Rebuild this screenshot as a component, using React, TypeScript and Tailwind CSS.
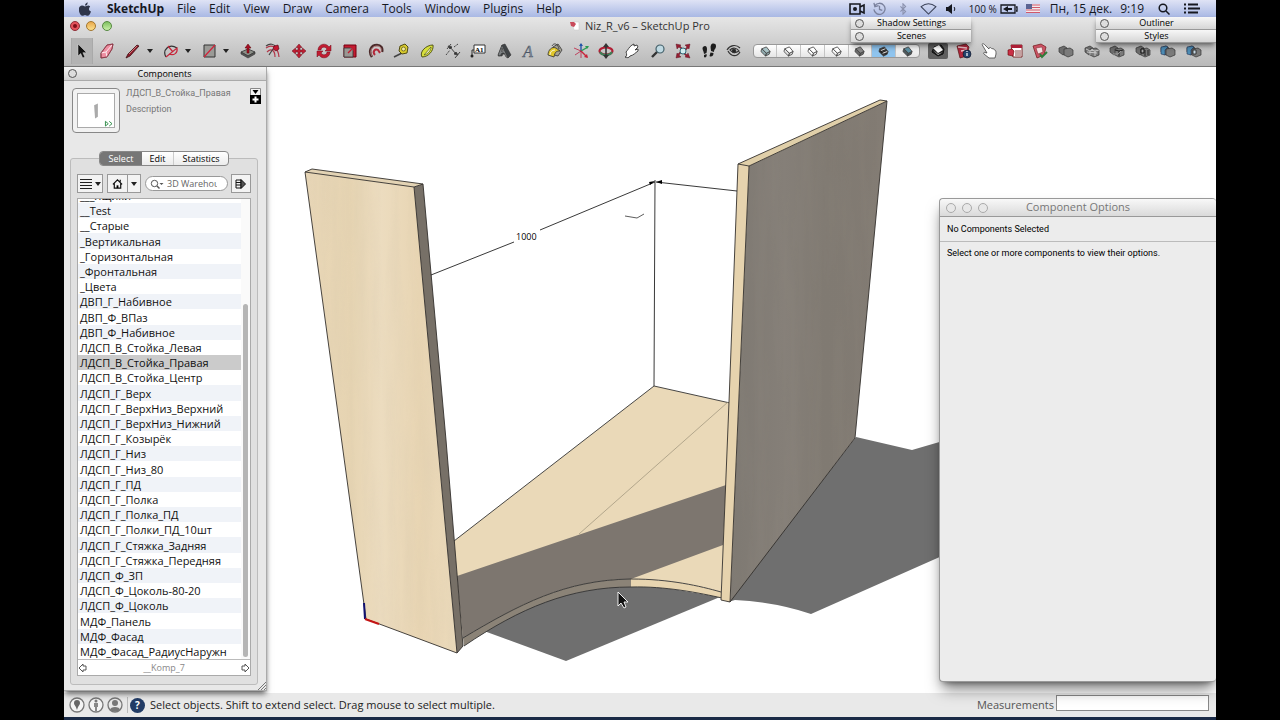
import React from 'react'

const menus = ['File', 'Edit', 'View', 'Draw', 'Camera', 'Tools', 'Window', 'Plugins', 'Help'];

const components = [
  '__Test',
  '__Старые',
  '_Вертикальная',
  '_Горизонтальная',
  '_Фронтальная',
  '_Цвета',
  'ДВП_Г_Набивное',
  'ДВП_Ф_ВПаз',
  'ДВП_Ф_Набивное',
  'ЛДСП_В_Стойка_Левая',
  'ЛДСП_В_Стойка_Правая',
  'ЛДСП_В_Стойка_Центр',
  'ЛДСП_Г_Верх',
  'ЛДСП_Г_ВерхНиз_Верхний',
  'ЛДСП_Г_ВерхНиз_Нижний',
  'ЛДСП_Г_Козырёк',
  'ЛДСП_Г_Низ',
  'ЛДСП_Г_Низ_80',
  'ЛДСП_Г_ПД',
  'ЛДСП_Г_Полка',
  'ЛДСП_Г_Полка_ПД',
  'ЛДСП_Г_Полки_ПД_10шт',
  'ЛДСП_Г_Стяжка_Задняя',
  'ЛДСП_Г_Стяжка_Передняя',
  'ЛДСП_Ф_ЗП',
  'ЛДСП_Ф_Цоколь-80-20',
  'ЛДСП_Ф_Цоколь',
  'МДФ_Панель',
  'МДФ_Фасад',
  'МДФ_Фасад_РадиусНаружн',
];

const solid = (
  <g stroke="#333" strokeWidth=".7" strokeLinejoin="round">
    <path d="m1 5 5-2 3 2v5l-4 2-4-3z" fill="#6d6d6d" />
    <path d="m6 6 6-1 3 2v5l-5 2-4-2z" fill="#7b7b7b" />
  </g>
);

// All toolbar drawings share a 16x16 box
const icons: Record<string, React.ReactNode> = {
  Select: <path d="M4 1v12l2.700-2.500 2 4.500 2.200-1-2-4.300h3.800z" fill="#111" stroke="#ddd" strokeWidth=".5" />,
  Eraser: (
    <g stroke="#8c3a48" strokeWidth=".8">
      <path d="M2 10 8 2l6-1-1 5-5 8-6 1z" fill="#ee8fa2" />
      <path d="m2 10 5-1 6-7M7 9l1 5" fill="none" stroke="#fff" />
      <path d="M2 10 8 2l6-1-1 5-5 8-6 1z" fill="none" />
    </g>
  ),
  Line: (
    <g>
      <path d="M1 15 3 11 12 2l2 1-9 10z" fill="#8d1c2b" stroke="#3d1015" strokeWidth=".8" />
      <path d="m4 11 8-8" stroke="#e08b8b" strokeWidth=".8" />
    </g>
  ),
  Arc: (
    <g fill="none">
      <path d="M3 14C-1 7 6 0 14 5" stroke="#333" strokeWidth="1.200" />
      <path d="m3 14 11-9c1 5-3 8-8 6M5 3l5 6" stroke="#c7253a" strokeWidth="1.200" />
    </g>
  ),
  Rectangle: (
    <g>
      <path d="M3 2h11v12H3z" fill="#9a9a96" stroke="#333" />
      <path d="M3 14 14 2" stroke="#d2213a" strokeWidth="1.200" />
    </g>
  ),
  'Push/Pull': (
    <g>
      <path d="m1 9 7-3 7 3-7 4z" fill="#8b8f88" stroke="#333" strokeWidth=".8" />
      <path d="M1 9v2l7 4 7-4V9l-7 4z" fill="#555" stroke="#333" strokeWidth=".6" />
      <path d="m8 1 3 4H9v5H7V5H5z" fill="#a80f26" stroke="#500" strokeWidth=".5" />
    </g>
  ),
  'Follow Me': (
    <g fill="none" strokeWidth="1.200">
      <path d="M1 5c5-4 12-2 13 9M2 9c4-4 8-2 8 5" stroke="#b3384a" />
      <path d="M1 3c4-3 8-2 10 1M4 12l4-6" stroke="#444" />
      <path d="m9 3 4-1 1 4-3 2-3-2z" fill="#c41730" stroke="#501" strokeWidth=".6" />
    </g>
  ),
  Move: (
    <path d="m8 1 3 3.500H9V7h2.500V5L15 8l-3.500 3V9H9v2.500h2L8 15l-3-3.500h2V9H4.500v2L1 8l3.500-3v2H7V4.500H5z" fill="#bf1f33" stroke="#6d0e1c" strokeWidth=".5" />
  ),
  Rotate: (
    <g fill="#c11c31" stroke="#700f1d" strokeWidth=".5">
      <path d="M2 7c0-6 8-8 11-3l2-2v6H9l2-2C9 3 5 4 5 7z" />
      <path d="M14 9c0 6-8 8-11 3l-2 2V8h6l-2 2c2 3 6 2 6-1z" />
    </g>
  ),
  Scale: (
    <g>
      <path d="M2 2h12v12H2z" fill="#c41b30" stroke="#701" />
      <path d="M2 5h9v9H2z" fill="#9b9793" stroke="#333" strokeWidth=".8" />
      <path d="m6 10 6-6M12 8V4H8" stroke="#c41b30" strokeWidth="1.400" fill="none" />
    </g>
  ),
  Offset: (
    <g fill="none">
      <path d="M4 14C0 8 3 2 9 2c4 0 6 3 5 7" stroke="#4b2a2a" strokeWidth="2.500" />
      <path d="M7 12C4 9 7 5 10 7l2 3" stroke="#b3283a" strokeWidth="2" />
      <path d="M4 13C1 8 4 3 9 3c3 0 5 2 4 6" stroke="#c98c8c" strokeWidth=".8" />
    </g>
  ),
  'Tape Measure': (
    <g>
      <path d="m1 14 8-4" stroke="#444" strokeWidth="1.600" />
      <path d="m7 3 5-2 3 3-1 6-5 1-3-3z" fill="#d8cb2e" stroke="#504b12" />
      <circle cx="10.500" cy="6" r="2" fill="#f2eca0" stroke="#504b12" strokeWidth=".7" />
    </g>
  ),
  Protractor: (
    <g stroke="#53561a">
      <path d="M3 14C0 9 7 2 14 2c1 6-5 12-11 12z" fill="#d7df3c" />
      <path d="m5 12 7-8c0 4-3 7-7 8z" fill="#f0f3bc" strokeWidth=".7" />
    </g>
  ),
  Dimension: (
    <g stroke="#444" fill="none" strokeWidth="1">
      <path d="m5 4 6 7M2 6l4-5M10 15l5-6" />
      <path d="m1 12 4-5m4-3 4-3" strokeDasharray="2 1" />
      <path d="m3 3 4 1-2 2zM13 12l-4-1 2-2z" fill="#333" />
    </g>
  ),
  Text: (
    <g>
      <path d="M4 2h11v8H4z" fill="#fff" stroke="#333" />
      <path d="M4 7H2v5" fill="none" stroke="#333" />
      <circle cx="2" cy="13" r="1.500" fill="#222" />
      <text x="5" y="9" fontSize="7" fontFamily="Liberation Serif, serif" fontWeight="bold">A1</text>
    </g>
  ),
  '3D Text': (
    <g stroke="#333" strokeWidth=".6" strokeLinejoin="round">
      <path d="m6 2 3-1 6 11-3 3-2-4-3 0-1 2-4 0z" fill="#3f4346" />
      <path d="m6 2-4 10 2 1 2-3 2 0 2 4 2 1z" fill="#7d8183" />
      <path d="m6 5 1 3-1.500.5z" fill="#ccc" />
    </g>
  ),
  'Section Text': (
    <text x="2" y="14" fontSize="16" fontStyle="italic" fontFamily="Liberation Serif, serif" fill="#8a93a3" stroke="#4b5563" strokeWidth=".5">A</text>
  ),
  'Paint Bucket': (
    <g stroke="#333" strokeWidth=".8">
      <path d="m6 4 5-3 4 6-4 6-4-1z" fill="#a5a295" />
      <path d="M1 12c0-5 4-9 8-7l4 3c-4 0-5 1-6 6z" fill="#e0c62a" />
      <path d="M3 12c0-3 2-5 5-5" fill="none" stroke="#fff" />
      <path d="M5 3c2-4 6-2 7 3" fill="none" />
    </g>
  ),
  Axes: (
    <g strokeWidth="1.400">
      <path d="M8 9V1" stroke="#2455a8" />
      <path d="m8 8 7-4" stroke="#2c9c53" />
      <path d="m8 8 6 6" stroke="#c8253a" />
      <path d="M8 8 1 5M8 8l-6 4m6-4v7" stroke="#b24" strokeWidth=".8" />
      <path d="m6 3 2-3 2 3z" fill="#2455a8" />
      <path d="m12 3 4 0-2 3z" fill="#2c9c53" />
      <path d="m11 14 4 1-1-4z" fill="#c8253a" />
    </g>
  ),
  Orbit: (
    <g fill="none">
      <ellipse cx="8" cy="8" rx="6.500" ry="3.500" stroke="#b11e35" strokeWidth="2.200" />
      <path d="M2 9c2 4 10 4 12 0" stroke="#3c8058" strokeWidth="2" />
      <path d="M8 2v12" stroke="#333" strokeWidth="1.600" />
      <path d="m5 4 3-4 3 4zM5 12l3 4 3-4z" fill="#333" />
    </g>
  ),
  Pan: (
    <path d="M1 14c2 0 2-3 1-5 2-2 3-5 6-7l2-1v2l3-1 1 2-3 3 3-1v2c-3 2-4 4-8 5-1 2-3 2-5 1z" fill="#fff" stroke="#333" strokeWidth=".9" />
  ),
  Zoom: (
    <g>
      <path d="m2 14 6-6" stroke="#333" strokeWidth="2.400" />
      <circle cx="10" cy="6" r="4" fill="#bfd9e2" stroke="#44606a" strokeWidth="1.200" />
    </g>
  ),
  'Zoom Extents': (
    <g>
      <path d="m1 1 5 1-1 1 2 2-1 1-2-2-2 2zM15 1l-1 5-1-1-2 2-1-1 2-2-2-2zM1 15l1-5 1 1 2-2 1 1-2 2 2 2zM15 15l-5-1 1-1-2-2 1-1 2 2 1-2z" fill="#951d31" stroke="#512" strokeWidth=".4" />
      <circle cx="8" cy="8" r="3" fill="#d3edf0" stroke="#336b78" />
    </g>
  ),
  Walk: (
    <g fill="#1d1d1d">
      <path d="M2 4c2-2 4-1 4 2 0 2-.5 3-.5 4L3 11C3 8 .5 6 2 4zM3 12l2.500-1c1 3-1.500 4-2.500 3z" />
      <path d="M10 2c1-2 5-2 5 1 0 3-2 3-2 6L10 8c0-2-1-4 0-6zM9.500 9.500l3 .5c0 4-3 4-4 3z" />
    </g>
  ),
  'Look Around': (
    <g fill="none" stroke="#333" strokeWidth="1.200">
      <path d="M1 7c3-5 9-6 13-2M2 8c3 6 9 6 12 1M4 7c3-3 7-2 9 1-3 2-6 3-9-1z" />
      <circle cx="8" cy="8" r="1.700" fill="#222" />
    </g>
  ),
  Warehouse: (
    <g strokeLinejoin="round">
      <path d="m2 9 2-5 7-2 3 4-1 5-5 2z" fill="#222" stroke="#111" />
      <path d="m3 5 6-3 4 5-5 3z" fill="#fff" />
      <path d="m3 7 5 5 5-3-5 2z" fill="#bbb" />
    </g>
  ),
  'Model Info': (
    <g>
      <path d="m1 3 9-2 3 3-2 9-7 2z" fill="#b3283e" stroke="#511" strokeWidth=".7" />
      <path d="m2 4 9 1M5 8l6-1" stroke="#eec5cc" strokeWidth="1.500" />
      <circle cx="11" cy="11" r="4" fill="#23436c" stroke="#112" strokeWidth=".6" />
      <path d="M11 10v3m0-5v1" stroke="#fff" strokeWidth="1.200" />
    </g>
  ),
  Interact: (
    <path d="M1 1.500C2 0 3 1 4 2l4 4c0-2 2-2 3 0 1-1 2 0 2.500 1 1.500 0 1.500 2 1.500 4l-1 4H8L3 11c-1-1 0-2 1-1.500L6 10z" fill="#fff" stroke="#444" strokeWidth=".8" />
  ),
  'Component Options': (
    <g>
      <path d="M4 2h11v12H6z" fill="#fff" stroke="#600" strokeWidth=".8" />
      <path d="M4 2h11v3H4z" fill="#ad1f37" />
      <path d="M8 8h6M8 10h6M8 12h6" stroke="#844" />
      <path d="m1 7 4-1 2 2-1 5-5-1z" fill="#c93047" stroke="#600" strokeWidth=".6" />
    </g>
  ),
  'Component Attributes': (
    <g>
      <path d="m1 3 8-2 5 3-2 8-7 3z" fill="#cc5265" stroke="#722" strokeWidth=".8" />
      <path d="m4 5 6-1 1 5-5 2z" fill="#f4dfe1" stroke="#722" strokeWidth=".5" />
      <path d="m8 11 2 3 5-5" fill="none" stroke="#2f7d3a" strokeWidth="2" />
    </g>
  ),
  'Outer Shell': solid,
  Intersect: (
    <g>
      {solid}
      <path d="m2 6 4 2v4M6 8l3-2M7 7l4 1v5M11 8l4-1M3 9l10 1" fill="none" stroke="#ddd" strokeWidth=".8" />
    </g>
  ),
  Union: (
    <g>
      {solid}
      <path d="m6 7 4 1v5m0-5 4-1" fill="none" stroke="#222" />
      <path d="M4 11h5l3-3" fill="none" stroke="#aaa" strokeWidth=".8" />
    </g>
  ),
  Subtract: (
    <g>
      {solid}
      <path d="m6 6 3 0v4l-3 0z" fill="#aaa" stroke="#111" />
      <path d="M10 7v6m3-6v5" stroke="#222" />
    </g>
  ),
  Trim: (
    <g>
      {solid}
      <path d="m1 4 5-1 2 1-3 3v5l-4-1z" fill="#4e8db5" stroke="#235" strokeWidth=".6" />
    </g>
  ),
  Split: (
    <g>
      {solid}
      <path d="m1 4 5-1 2 1-3 3v5l-4-1z" fill="#4e8db5" stroke="#235" strokeWidth=".6" />
      <path d="m7 7 3 0v4l-3 0z" fill="#c9dbe6" stroke="#222" strokeWidth=".8" />
    </g>
  ),
};

const mainTools = [
  'Push/Pull', 'Follow Me', 'Move', 'Rotate', 'Scale', 'Offset', 'Tape Measure', 'Protractor', 'Dimension', 'Text',
  '3D Text', 'Section Text', 'Paint Bucket', 'Axes', 'Orbit', 'Pan', 'Zoom', 'Zoom Extents', 'Walk', 'Look Around',
];

const extraTools = [
  'Warehouse', 'Model Info', 'Interact', 'Component Options', 'Component Attributes',
  'Outer Shell', 'Intersect', 'Union', 'Subtract', 'Trim', 'Split',
];

const faceStyles = [
  { label: 'X-Ray', top: '#a9c3c6', side: '#8fa9ad' },
  { label: 'Back Edges', top: '#ffffff', side: '#dddddd' },
  { label: 'Wireframe', top: '#ffffff', side: '#ffffff' },
  { label: 'Hidden Line', top: '#ffffff', side: '#f6f6f6' },
  { label: 'Shaded', top: '#8b8b8b', side: '#6b6b6b' },
  { label: 'Shaded With Textures', top: '#333333', side: '#222222' },
  { label: 'Monochrome', top: '#5f93a6', side: '#4d5a5e' },
];

const Icon = ({ name }: { name: string }) => (
  <svg viewBox="0 0 16 16" className="size-4 shrink-0">{icons[name]}</svg>
);

const Caret = () => (
  <svg viewBox="0 0 6 4" className="h-1 w-[6px] shrink-0"><path d="M0 0h6L3 4z" fill="#222" /></svg>
);

const Tool = ({ name }: { name: string }) => (
  <button
    aria-label={name}
    className={`flex w-5 items-center justify-center ${name === 'Warehouse' ? 'h-4 rounded-[2px] bg-[#606060]' : 'h-5'}`}
  >
    <Icon name={name} />
  </button>
);

const DropTool = ({ name }: { name: string }) => (
  <button aria-label={name} className="flex h-5 w-7 items-center justify-between">
    <Icon name={name} />
    <Caret />
  </button>
);

const MenuBar = () => (
  <header className="flex h-[17px] shrink-0 items-center justify-between bg-linear-to-b from-[#dfe3f5] to-[#a9b8e4] pr-4 pl-[15px] text-[12px] leading-4 text-[#16181f]">
    <nav className="flex items-center gap-[13px]">
      <a href="#" aria-label="Apple" className="pr-[3px]">
        <svg viewBox="0 0 14 16" className="h-[14px] w-3">
          <path d="M10 1c0 2-1 3-3 3 0-2 1-3 3-4zM7 5c1 0 2-1 4-1 1 0 2 1 2 1-2 2-2 5 1 6-1 3-2 5-4 5-1 0-2-1-3-1s-2 1-3 1c-3 0-6-8-3-11 2-2 4-1 6 0z" fill="#30364a" />
        </svg>
      </a>
      <a href="#" className="font-bold">SketchUp</a>
      {menus.map((item) => (
        <a key={item} href="#">{item}</a>
      ))}
    </nav>
    <div className="flex items-center">
      <svg viewBox="0 0 16 12" className="mr-2 h-3 w-4">
        <path d="M1 1h10v10H1zM11 4l4-2v8l-4-2" fill="none" stroke="#16181f" strokeWidth="1.600" />
        <circle cx="6" cy="6" r="2" fill="#16181f" />
      </svg>
      <svg viewBox="0 0 14 14" className="mr-3 size-[13px]" fill="none" stroke="#7a819d" strokeWidth="1.400">
        <path d="M2 4a6 6 0 1 1-1 4M1 1l1 4 4-1M7 4v4l3 1" />
      </svg>
      <svg viewBox="0 0 10 14" className="mr-3 h-3 w-[10px]" fill="none" stroke="#8a91ad" strokeWidth="1.300">
        <path d="m2 4 6 6-3 3V1l3 3-6 6" />
      </svg>
      <svg viewBox="0 0 18 13" className="mr-2 h-3 w-[17px]" fill="none" stroke="#3c4359" strokeWidth="1.100">
        <path d="M1 4c5-4 11-4 16 0l-8 8z" />
      </svg>
      <svg viewBox="0 0 12 10" className="mr-3 h-[10px] w-3">
        <path d="M1 3h2l4-3v10L3 7H1z" fill="#16181f" />
        <path d="M9 3c1 1 1 3 0 4" fill="none" stroke="#16181f" />
      </svg>
      <span className="mr-[3px] text-[10px]">100 %</span>
      <svg viewBox="0 0 18 10" className="mr-2 h-[10px] w-[18px]">
        <path d="M1 1h14v8H1zM16 3h1v4h-1" fill="none" stroke="#16181f" strokeWidth="1.300" />
        <path d="m3 5 5-3v2h4v2H8v2z" fill="#16181f" />
      </svg>
      <svg viewBox="0 0 14 9" className="mr-[10px] h-[9px] w-[14px]">
        <path d="M0 0h14v9H0z" fill="#f3e9ec" />
        <path d="M0 1h14M0 3.500h14M0 6h14M0 8.500h14" stroke="#d0596b" />
        <path d="M0 0h6v5H0z" fill="#5b6493" />
      </svg>
      <time className="flex gap-2"><span>Пн, 15 дек.</span><span>9:19</span></time>
      <svg viewBox="0 0 12 12" className="mx-[14px] size-3" fill="none" stroke="#16181f" strokeWidth="1.500">
        <circle cx="5" cy="5" r="3.800" />
        <path d="m8 8 3.500 3.500" />
      </svg>
      <svg viewBox="0 0 16 11" className="h-[11px] w-4" stroke="#16181f" strokeWidth="2">
        <path d="M0 1.500h2M4 1.500h10M0 5.500h2M4 5.500h12M0 9.500h2M4 9.500h10" />
      </svg>
    </div>
  </header>
);

const Toolbar = () => (
  <div className="flex h-8 items-center justify-between pr-3 pl-[7px]">
    <div className="flex items-center gap-1">
      <button aria-label="Select" className="flex h-[26px] w-[22px] items-center justify-center border-x border-[#a9a9a9] bg-[#b3b3b3]">
        <Icon name="Select" />
      </button>
      <Tool name="Eraser" />
    </div>
    <div className="flex w-[104px] justify-between">
      <DropTool name="Line" />
      <DropTool name="Arc" />
      <DropTool name="Rectangle" />
    </div>
    <div className="flex w-[507px] justify-between">
      {mainTools.map((name) => <Tool key={name} name={name} />)}
    </div>
    <div className="flex h-[14px] w-[167px] divide-x divide-[#c4c4c4] overflow-hidden rounded-[4px] border border-[#999] bg-linear-to-b from-white to-[#e6e6e6]">
      {faceStyles.map((face, i) => (
        <button
          key={face.label}
          aria-label={face.label}
          className={`flex flex-1 items-center justify-center ${i === 5 ? 'bg-[#8fc4ee]' : ''}`}
        >
          <svg viewBox="0 0 12 12" className="size-[11px]" stroke="#444" strokeWidth=".9" strokeLinejoin="round">
            <path d="m2 3 5-2 4 5-4 2z" fill={face.top} />
            <path d="M2 3 1 6l5 5 1-3zM7 8l-1 3 4-2 1-3z" fill={face.side} />
            {i === 5 && <path d="m3 5 5-2M5 8l5-2" stroke="#fff" />}
          </svg>
        </button>
      ))}
    </div>
    <div className="flex w-[276px] items-center justify-between">
      {extraTools.map((name) => <Tool key={name} name={name} />)}
    </div>
  </div>
);

const TitleBar = () => (
  <div className="flex h-[18px] items-center px-[6px] text-[11px] text-[#333]">
    <div className="flex flex-1 gap-[6px]">
      <button aria-label="Close" className="flex size-[10px] items-center justify-center rounded-full border border-[#8d3038] bg-[#e4525c]">
        <span className="size-1 rounded-full bg-[#7d0f18]" />
      </button>
      <button aria-label="Minimize" className="size-[10px] rounded-full border border-[#a3762c] bg-linear-to-b from-[#e9a94a] to-[#fbe08c]" />
      <button aria-label="Zoom window" className="size-[10px] rounded-full border border-[#55893f] bg-linear-to-b from-[#7fc05f] to-[#cbf0a8]" />
    </div>
    <h1 className="flex items-center gap-[5px]">
      <svg viewBox="0 0 10 10" className="size-[10px]">
        <path d="M2 1h7v8H4z" fill="#fff" stroke="#ccc" strokeWidth=".6" />
        <path d="m0 1 4 0 2 2-2 3-3-1z" fill="#c94b5b" />
      </svg>
      Niz_R_v6 – SketchUp Pro
    </h1>
    <div className="flex-1" />
  </div>
);

const Palettes = ({ titles, className }: { titles: string[]; className: string }) => (
  <div className={`absolute top-0 z-10 w-[120px] shadow-md shadow-black/40 ${className}`}>
    {titles.map((title) => (
      <div key={title} className="flex h-[13px] items-center border-b border-[#999] bg-linear-to-b from-[#f7f7f7] to-[#d6d6d6] pl-1 text-[9px] leading-3 text-black">
        <button aria-label={`Close ${title}`} className="size-[9px] rounded-full border border-[#555] bg-[#ddd]" />
        <h2 className="flex-1 pr-3 text-center">{title}</h2>
      </div>
    ))}
  </div>
);

const ComponentsPanel = () => (
  <aside className="relative z-10 flex w-[203px] shrink-0 flex-col border-r border-b border-[#aaa] bg-[#e8e8e8] shadow-md shadow-black/50">
    <div className="flex h-[14px] items-center border-b border-[#aaa] bg-linear-to-b from-[#f4f4f4] to-[#d0d0d0] pl-1">
      <button aria-label="Close Components" className="size-[9px] rounded-full border border-[#555] bg-[#ddd]" />
      <h2 className="flex-1 pr-[14px] text-center text-[9px] leading-3">Components</h2>
    </div>

    <div className="flex pt-[7px] pr-[5px] pl-2 font-['Roboto','Open_Sans',sans-serif] text-[9px] text-[#777]">
      <div className="h-[45px] w-[48px] rounded-[4px] border border-[#888] bg-[#f2f2f2] p-1">
        <svg viewBox="0 0 38 35" className="h-full w-full border border-[#aaa] bg-white">
          <path d="m17 12 4-2v14l-3 2z" fill="#aaa" />
          <path d="M29 29v5l3-2.500zM33 29l3 2.500-3 2.500" fill="none" stroke="#2c8a45" />
        </svg>
      </div>
      <div className="flex-1 pl-[6px] leading-4">
        <p className="-mt-[3px]">ЛДСП_В_Стойка_Правая</p>
        <p>Description</p>
      </div>
      <button aria-label="Secondary pane" className="h-4 w-[11px]">
        <svg viewBox="0 0 11 16" className="h-4 w-[11px]">
          <path d="M.5.5h10v7H.5z" fill="#f4f4f4" stroke="#888" />
          <path d="M2.500 2h6l-3 4z" />
          <path d="M0 7h11v9H0z" />
          <path d="M5.500 8.500v6m-3-3h6" stroke="#fff" strokeWidth="2" />
        </svg>
      </button>
    </div>

    <div className="mt-[25px] mr-2 mb-[5px] ml-[6px] flex flex-1 flex-col rounded-[3px] border border-[#bcbcbc] bg-[#e0e0e0] px-[6px] pb-2">
      <div role="tablist" className="-mt-2 flex h-[15px] w-[130px] self-center overflow-hidden rounded-[4px] border border-[#888] bg-linear-to-b from-white to-[#ececec] text-[9px] leading-3">
        <button role="tab" aria-selected="true" className="w-[42px] bg-[#767676] text-white">Select</button>
        <button role="tab" className="w-8 border-r border-[#ccc]">Edit</button>
        <button role="tab" className="flex-1">Statistics</button>
      </div>

      <div className="mt-2 mb-[5px] flex h-[19px] items-stretch">
        <button aria-label="View options" className="flex w-[26px] items-center justify-center gap-[3px] border border-[#999] bg-[#f3f3f3]">
          <svg viewBox="0 0 12 11" className="h-[11px] w-3"><path d="M0 1.500h12M0 4.500h12M0 7.500h12M0 10.500h12" stroke="#222" /></svg>
          <Caret />
        </button>
        <button aria-label="In Model" className="ml-1 flex w-[21px] items-center justify-center border border-[#999] bg-[#f3f3f3]">
          <svg viewBox="0 0 12 12" className="size-[11px]">
            <path d="M1 7l5-5 5 5M2.500 6v5h7V6M9 2v2" fill="none" stroke="#111" strokeWidth="1.300" />
            <path d="M5 8h2v3H5z" />
          </svg>
        </button>
        <button aria-label="Navigation" className="-ml-px flex w-[14px] items-center justify-center border border-[#999] bg-[#f3f3f3]">
          <Caret />
        </button>
        <label className="my-[2px] ml-1 flex flex-1 items-center overflow-hidden rounded-full border border-[#999] bg-white pr-[10px] pl-1">
          <svg viewBox="0 0 14 10" className="h-[10px] w-[14px] shrink-0" fill="none" stroke="#555">
            <circle cx="4.500" cy="4.500" r="3.200" />
            <path d="m7 7 2.500 2.500" strokeWidth="1.400" />
            <path d="M9.500 4h4l-2 2z" fill="#555" stroke="none" />
          </svg>
          <input aria-label="Search 3D Warehouse" defaultValue="3D Warehouse" className="ml-[3px] w-full min-w-0 bg-transparent text-[9px] leading-3 text-[#666] outline-none" />
        </label>
        <button aria-label="Details" className="ml-[3px] flex w-[20px] items-center justify-center border border-[#999] bg-[#f3f3f3]">
          <svg viewBox="0 0 12 12" className="size-3">
            <path d="M1 2h5v8H1zM1 4.500h5M1 7h5" fill="none" stroke="#111" />
            <path d="M6 1.500 10.500 6 6 10.500z" fill="#555" stroke="#111" />
          </svg>
        </button>
      </div>

      <div className="flex flex-1 flex-col border border-[#aaa] bg-white">
        <div className="flex flex-1">
          <ul className="flex flex-1 flex-col overflow-hidden text-[11px] whitespace-nowrap text-[#111]">
            <li className="flex h-1 shrink-0 items-end overflow-hidden pl-[2px] leading-[15px]">___Ящики</li>
            {components.map((name, i) => (
              <li
                key={name}
                className={`flex flex-1 items-center pl-[2px] leading-[15px] ${
                  i === 10 ? 'bg-[#cbcbcb]' : i % 2 === 0 ? 'bg-[#f0f3f8]' : ''
                }`}
              >
                {name}
              </li>
            ))}
          </ul>
          <div className="flex w-[9px] flex-col items-center bg-[#fafafa] pt-[105px] pb-[2px]">
            <div className="w-[5px] flex-1 rounded-full bg-[#b5b5b5]" />
          </div>
        </div>
        <div className="flex h-4 items-center justify-between border-t border-[#bbb] text-[9px] text-[#888]">
          <button aria-label="Back">
            <svg viewBox="0 0 10 10" className="size-[10px]"><path d="m1 5 4-4v2h3v4H5v2z" fill="#fff" stroke="#555" /></svg>
          </button>
          <span>__Komp_7</span>
          <button aria-label="Forward">
            <svg viewBox="0 0 10 10" className="size-[10px]"><path d="M9 5 5 1v2H2v4h3v2z" fill="#fff" stroke="#555" /></svg>
          </button>
        </div>
      </div>
    </div>
    <svg viewBox="0 0 8 8" className="absolute right-0 bottom-0 size-2"><path d="m0 8 8-8M3 8l5-5M6 8l2-2" stroke="#777" /></svg>
  </aside>
);

// Cabinet model: two uprights, the radius shelf between them and their shadows
const Model = () => (
  <svg viewBox="64 67 1152 626" className="absolute inset-0 h-full w-full" strokeLinejoin="round">
    <defs>
      <linearGradient id="wood" x1="0" x2="1" y1="0" y2="0">
        <stop offset="0" stopColor="#e9d7b7" />
        <stop offset=".3" stopColor="#e6d4b2" />
        <stop offset=".5" stopColor="#ecdcbf" />
        <stop offset=".75" stopColor="#e8d5b3" />
        <stop offset="1" stopColor="#ebdabb" />
      </linearGradient>
      <linearGradient id="shade" x1="0" x2="1" y1="0" y2="0">
        <stop offset="0" stopColor="#7e7972" />
        <stop offset=".35" stopColor="#857f78" />
        <stop offset=".6" stopColor="#807a72" />
        <stop offset="1" stopColor="#827b73" />
      </linearGradient>
      <filter id="grain" x="0" y="0" width="1" height="1">
        <feTurbulence type="fractalNoise" baseFrequency=".09 .008" numOctaves="3" seed="4" />
        <feColorMatrix values="0 0 0 0 .45  0 0 0 0 .4  0 0 0 0 .32  .5 0 0 0 -.16" />
        <feComposite in2="SourceGraphic" operator="in" />
      </filter>
    </defs>

    <path d="M856 437 912 450 960 436V548L811 614Q775 602 735 600L728 602Z" fill="#6f6f6f" />
    <path d="M484 631 566 661 720 597 630 582 540 600Z" fill="#6f6f6f" />

    {/* shelf */}
    <path d="M454 541 654 386 730 403 721 592C700 586 670 579 630 579C565 580 520 604 463 638Z" fill="#ead9b8" />
    <path d="M457 576 726 485 723 545 631 579C565 580 520 604 463 638Z" fill="#7d766f" />
    <path d="M463 638C520 604 565 580 631 579V587C570 587 520 608 464 646Z" fill="#8b8377" />
    <path d="M631 579C670 579 700 586 721 592L722 598C700 593 665 586 631 587Z" fill="#e8d5b0" />
    <path d="M454 541 654 386 730 403M463 638C520 604 565 580 631 579C670 579 700 586 721 592M464 646C520 608 570 587 631 587C665 586 700 593 722 598" fill="none" stroke="#333" strokeWidth=".9" />
    <path d="M728 402 579 534" stroke="#9b9079" strokeWidth=".7" />

    {/* left upright */}
    <path d="M305 172 414 187 457 653 366 619Z" fill="url(#wood)" />
    <path d="M305 172 414 187 457 653 366 619Z" filter="url(#grain)" opacity=".3" />
    <path d="M414 187 423 184 446 440 463 646 457 653Z" fill="#777067" />
    <path d="M305 172 312 169 423 184 414 187Z" fill="#e3d3b4" />
    <path d="M305 172 312 169 423 184 414 187ZM414 187 457 653M423 184 446 440 463 646 457 653 366 619 305 172" fill="none" stroke="#33302c" strokeWidth=".9" />

    {/* right upright */}
    <path d="M749 166 887 101 855 438 730 602Z" fill="url(#shade)" />
    <path d="M749 166 887 101 855 438 730 602Z" filter="url(#grain)" opacity=".25" />
    <path d="M738 164 749 166 730 602 721 600 729 402Z" fill="#e6d3ae" />
    <path d="M738 164 880 100 887 101 749 166Z" fill="#e0cfa9" />
    <path d="M738 164 880 100 887 101 749 166ZM749 166 730 602M738 164 729 402 721 600 730 602 855 438 887 101" fill="none" stroke="#33302c" strokeWidth=".9" />

    {/* dimensions */}
    <path d="M431 275 514 242M540 230 655 182M655 180 654 386M656 182 737 191" fill="none" stroke="#222" strokeWidth=".9" />
    <path d="M625 216 637 218 644 214" fill="none" stroke="#333" strokeWidth=".8" />
    <path d="m655 181-6 1 1 3zM656 182l6-2v4z" />
    <text x="516" y="240" fontSize="9" fill="#000">1000</text>
    <path d="M364 603 365 619" stroke="#101070" strokeWidth="2" />
    <path d="M365 619 379 624" stroke="#c41414" strokeWidth="2" />

    <path d="M618 592v14l3-3 3 5 2-1-2-5h4z" fill="#111" stroke="#fff" strokeWidth=".9" />
  </svg>
);

const ComponentOptions = () => (
  <section className="absolute top-[131px] right-0 bottom-[11px] w-[277px] rounded-[4px] border border-r-0 border-[#999] bg-[#ececec] font-['Roboto','Open_Sans',sans-serif] text-[9px] shadow-lg shadow-black/50">
    <div className="flex h-[18px] items-center rounded-t-[4px] border-b border-[#999] bg-linear-to-b from-[#f8f8f8] to-[#dadada] px-[6px]">
      <div className="flex flex-1 gap-[6px]">
        <button aria-label="Close options" className="size-[10px] rounded-full border border-[#aaa] bg-[#e8e8e8]" />
        <button aria-label="Minimize options" className="size-[10px] rounded-full border border-[#aaa] bg-[#e8e8e8]" />
        <button aria-label="Zoom options" className="size-[10px] rounded-full border border-[#aaa] bg-[#e8e8e8]" />
      </div>
      <h2 className="font-['Open_Sans','Noto_Sans',sans-serif] text-[11px] text-[#777]">Component Options</h2>
      <div className="flex-1" />
    </div>
    <p className="border-b border-[#bbb] px-[7px] py-[5px] leading-[14px]">No Components Selected</p>
    <p className="px-[7px] py-[3px] leading-4">Select one or more components to view their options.</p>
  </section>
);

const StatusBar = () => (
  <footer className="flex h-6 shrink-0 items-center bg-[#e9e9e9] px-[5px] text-[11px] text-[#222]">
    <div className="flex items-center gap-[3px] border-r border-[#bbb] pr-1">
      <button aria-label="Geo-location">
        <svg viewBox="0 0 16 16" className="size-4">
          <circle cx="8" cy="8" r="7" fill="#f4f4f4" stroke="#777" strokeWidth="1.300" />
          <path d="M8 13C7 9 5 8 5 6a3 3 0 0 1 6 0c0 2-2 3-3 7z" fill="#666" />
        </svg>
      </button>
      <button aria-label="Credits">
        <svg viewBox="0 0 16 16" className="size-4">
          <circle cx="8" cy="8" r="7" fill="#f4f4f4" stroke="#777" strokeWidth="1.300" />
          <circle cx="8" cy="4" r="1.500" fill="#777" />
          <path d="M6 6h4v4H9v4H7v-4H6z" fill="#888" />
        </svg>
      </button>
      <button aria-label="Sign in">
        <svg viewBox="0 0 16 16" className="size-4">
          <circle cx="8" cy="8" r="7" fill="#e8e8e8" stroke="#777" strokeWidth="1.300" />
          <circle cx="8" cy="6" r="3" fill="#777" />
          <path d="M3 13c0-4 10-4 10 0-3 2-7 2-10 0z" fill="#777" />
        </svg>
      </button>
    </div>
    <button aria-label="Help" className="mr-[5px] ml-[2px] flex size-[15px] items-center justify-center rounded-full bg-[#223c66] text-[10px] font-bold text-white">?</button>
    <p>Select objects. Shift to extend select. Drag mouse to select multiple.</p>
    <label htmlFor="measurements" className="mr-[2px] ml-auto text-[#555]">Measurements</label>
    <input id="measurements" className="mr-[2px] mb-1 h-4 w-[153px] border border-[#888] bg-white px-1" />
  </footer>
);

export default function App() {
  return (
    <div className="h-screen bg-black px-16 font-['Open_Sans','Noto_Sans',sans-serif]">
      <div className="flex h-full flex-col bg-[#1b2b47] pb-[3px]">
        <MenuBar />
        <div className="relative flex min-h-0 flex-1 flex-col">
          <div className="h-[50px] shrink-0 border-b border-[#777] bg-linear-to-b from-[#e6e6e6] to-[#b9b9b9]">
            <TitleBar />
            <Toolbar />
          </div>
          <Palettes titles={['Shadow Settings', 'Scenes']} className="right-[245px]" />
          <Palettes titles={['Outliner', 'Styles']} className="right-0" />
          <main className="relative flex min-h-0 flex-1 bg-white pb-[2px]">
            <Model />
            <ComponentsPanel />
            <ComponentOptions />
          </main>
          <StatusBar />
        </div>
      </div>
    </div>
  );
}
